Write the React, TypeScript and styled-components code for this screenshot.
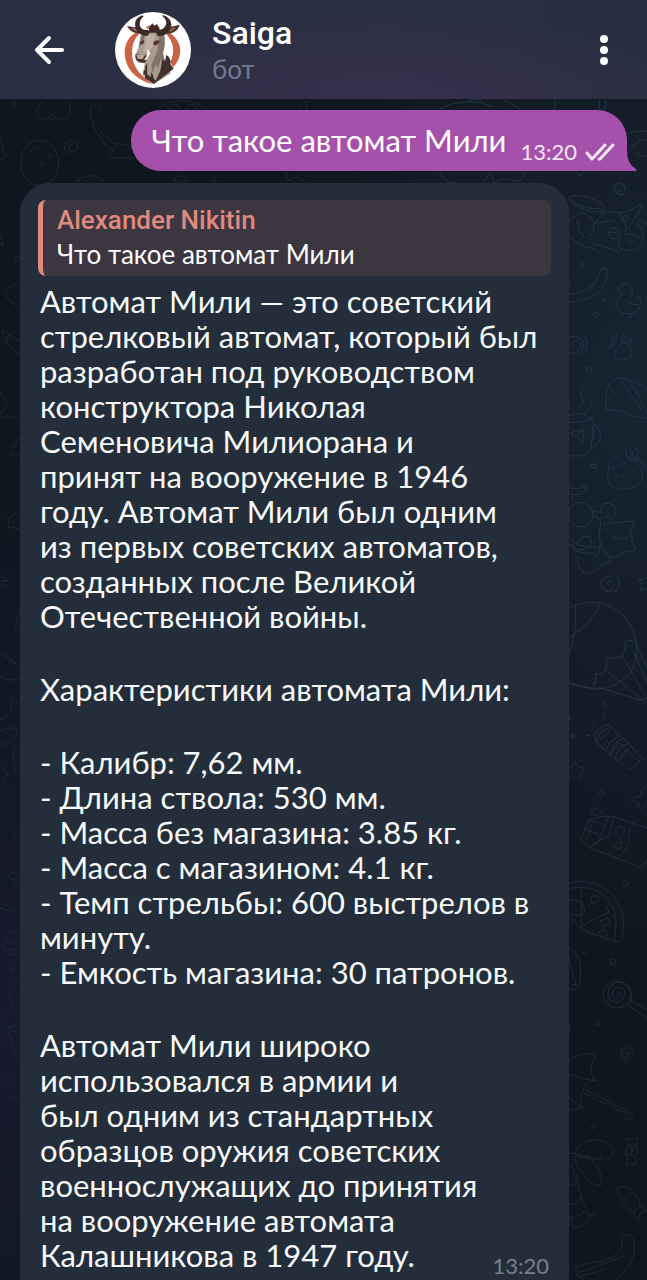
import React from "react";
import styled, { createGlobalStyle } from "styled-components";

const GlobalStyle = createGlobalStyle`
  * { box-sizing: border-box; }
  body { margin: 0; background: #10161f; }
`;

const textFont = `Lato, "Noto Sans", sans-serif`;
const uiFont = `Roboto, "Noto Sans", sans-serif`;

const Page = styled.div`
  position: relative;
  min-height: 100vh;
  display: flex;
  flex-direction: column;
  overflow: hidden;
  color: #fff;
  font-family: ${textFont};
  background:
    radial-gradient(ellipse 60% 45% at 100% 30%, #172432 0%, rgba(23, 36, 50, 0) 100%),
    radial-gradient(ellipse 50% 45% at 0% 80%, #161a2d 0%, rgba(22, 26, 45, 0) 100%),
    #0f161f;
`;

const Doodles = styled.svg<{ $side: "left" | "right" }>`
  position: absolute;
  top: 0;
  ${(p) => p.$side}: 0;
  fill: none;
  stroke: ${(p) => (p.$side === "left" ? "#1f2835" : "#253444")};
  stroke-width: 3;
  stroke-linecap: round;
  stroke-linejoin: round;
`;

const Header = styled.header`
  position: relative;
  display: flex;
  align-items: center;
  height: 99px;
  padding: 0 20px 0 26px;
  background:
    radial-gradient(ellipse 55% 90% at 62% 100%, #37304b 0%, rgba(55, 48, 75, 0) 100%),
    linear-gradient(90deg, #292f42, #2b3043 60%, #252e3e);
`;

const IconButton = styled.button`
  display: flex;
  align-items: center;
  justify-content: center;
  width: 46px;
  height: 46px;
  padding: 0;
  border: 0;
  background: none;
  color: #fff;
`;

const Avatar = styled.svg`
  width: 76px;
  height: 76px;
  margin: 0 21px 0 43px;
  flex: none;
`;

const Peer = styled.div`
  flex: 1;
  padding-top: 2px;
`;

const PeerName = styled.h1`
  margin: 0;
  font-family: ${uiFont};
  font-size: 32px;
  line-height: 36px;
  font-weight: 500;
`;

const PeerStatus = styled.p`
  margin: 0;
  font-family: ${textFont};
  font-size: 26px;
  line-height: 36px;
  color: #747b91;
`;

const Chat = styled.main`
  position: relative;
  flex: 1;
  display: flex;
  flex-direction: column;
  gap: 12px;
  padding: 11px 20px 0;
`;

const Outgoing = styled.article`
  position: relative;
  align-self: flex-end;
  display: flex;
  align-items: flex-end;
  gap: 14px;
  height: 61px;
  padding: 0 12px 0 20px;
  border-radius: 30px 30px 0 30px;
  background: #a551ab;
`;

const Tail = styled.svg`
  position: absolute;
  right: -10px;
  bottom: 0;
`;

const OutgoingText = styled.p`
  margin: 0;
  font-size: 31px;
  line-height: 61px;
`;

const Meta = styled.span<{ $muted?: boolean }>`
  display: flex;
  align-items: center;
  gap: 8px;
  font-size: 22px;
  line-height: 26px;
  color: ${(p) => (p.$muted ? "#73808f" : "#f7e6f8")};
`;

const OutgoingMeta = styled(Meta)`
  padding-bottom: 6px;
`;

const Incoming = styled.article`
  margin-right: 58px;
  padding: 17px 18px 0;
  flex: 1;
  border-radius: 30px 30px 0 0;
  background: #232e3a;
`;

const Quote = styled.blockquote`
  margin: 0 0 8px;
  padding: 4px 14px 5px;
  border-left: 5px solid #e08a7e;
  border-radius: 8px;
  background: #3b3640;
`;

const QuoteAuthor = styled.p`
  margin: 0;
  font-family: ${uiFont};
  font-size: 26px;
  line-height: 33px;
  font-weight: 500;
  color: #e0897d;
`;

const QuoteText = styled.p`
  margin: 0;
  font-size: 26px;
  line-height: 34px;
`;

const Body = styled.div`
  display: flex;
  flex-direction: column;
  gap: 38px;
  padding: 0 2px;
  font-size: 31px;
  line-height: 35px;
  color: #f7f9fb;
`;

const Paragraph = styled.p`
  margin: 0;
  white-space: pre-line;
`;

const LastRow = styled.div`
  display: flex;
  justify-content: space-between;
  align-items: flex-end;

  ${Paragraph} {
    padding-bottom: 6px;
  }
`;

const intro = `Автомат Мили — это советский
стрелковый автомат, который был
разработан под руководством
конструктора Николая
Семеновича Милиорана и
принят на вооружение в 1946
году. Автомат Мили был одним
из первых советских автоматов,
созданных после Великой
Отечественной войны.`;

const specs = `- Калибр: 7,62 мм.
- Длина ствола: 530 мм.
- Масса без магазина: 3.85 кг.
- Масса с магазином: 4.1 кг.
- Темп стрельбы: 600 выстрелов в
минуту.
- Емкость магазина: 30 патронов.`;

const outro = `Автомат Мили широко
использовался в армии и
был одним из стандартных
образцов оружия советских
военнослужащих до принятия
на вооружение автомата
Калашникова в 1947 году.`;

function LeftDoodles() {
  return (
    <Doodles $side="left" width="330" height="1280" viewBox="0 0 330 1280" aria-hidden="true">
      <g transform="translate(0 90) scale(.3333)">
        <circle cx="43" cy="43" r="6" />
        <path d="M126 36q-24 22-10 46 20 16 40-8 22 24 46 8 14-20 4-48M150 74v14h16" />
        <path d="M118 150c38 0 58 36 58 72 0 40-26 64-56 64-34 0-58-30-58-66 0-38 20-70 56-70M90 186q14-14 30-14M120 212v10q6 10 12 0M146 200q12 10 8-6" />
        <path d="M218 168c-10-6-20 8-8 16 18 8 30-18 14-30-26-12-46 32-16 34" />
        <path d="M298 56c12-12-14-24-24-6-10 40 20 102 66 132M300 120q24 34 50 44M326 204l24-44 50 10M326 204h74" />
        <path d="M230 276q30-30 62-14 20 6 18 14M0 134l16 68-16 6M0 436l10 30-10-6" />
        <circle cx="52" cy="507" r="7" />
        <path d="M60 576q-30 12-44 34 10 30 44 42M4 720l56 34M6 724q20 58 54 70M26 732l-8 26M0 904l22 42-22 26M0 982q36-6 60 8M60 1040l-32 54q20 10 32 0M60 1278l-18-8-8 12-12 4 6 14-4 14 16-2 20 6M0 1462q16 0 18 12-10 14-18 10" />
      </g>
      <g transform="translate(0 580) scale(.3333)">
        <path d="M0 4l26-2M4 22l18-6M60 84l-14 60 14 8M0 198q22 36 50 52l-50-30M0 290q40 20 60 4M30 244q22 4 30 24M38 358q0 46-38 62M50 364v12M0 452q34-18 52 0 2 26-52 46M0 560q34 14 10 50l-10 10" />
        <path d="M60 500q-22 0-18 18-10 12 2 22-10 14 2 24-6 14 14 18M52 536a5 5 0 1 1-1 0M60 742l-20 24q8 6 20 2M60 882q-38-10-34 8 6 10 16 6-8 20 18 14M0 970l34 10q14 10 2 16l-36-14" />
        <path d="M24 1082q-18-6 0-20 16-20 30 0M8 1094q30-12 52-6M8 1094q6 40 52 30M10 1110h50" />
        <circle cx="36" cy="1167" r="5" />
        <path d="M60 1198q-60 32-10 98M60 1334l-38 8 24 78 14 20M22 1342q20 20 38 14M60 1550q-20-6-32 6" />
        <circle cx="23" cy="1505" r="11" />
      </g>
      <g transform="scale(.3333)">
        <path d="M470 332q30-32 76-30 50 0 78 30M510 330q-2-20 16-18 14 4 12 18M560 330q0-20 20-16 12 6 8 18M900 330q0-26 26-24M916 332q10-10 4-18M524 546q0-22 22-18 20 6 14 22M540 548q2-10 10-4M640 538l10 10M856 516l10 26 24-10 30 16" />
      </g>
    </Doodles>
  );
}

function RightDoodles() {
  return (
    <Doodles $side="right" width="207" height="1280" viewBox="440 0 207 1280" aria-hidden="true">
      <g transform="translate(440 0) scale(.3333)">
        <path d="M0 326q80-40 160-6M84 306q16-12 44-6M196 302l46 26M344 302q6 14 0 28M478 300v30M496 300q4 20-6 32M560 400q40-10 61-6M570 450q30-40 51-30M590 460q30 20 31 6M0 520q20 40 50 26M130 546l22-30 10 32q36-20 70-2 24-10 18-30M410 520a10 8 0 0 0 18 0M524 570q0-22 18-20 16 6 12 20" />
      </g>
      <g transform="translate(540 170) scale(.3333)">
        <path d="M108 8q8 14 20 2M244 62c-14-8-18 14 0 12 22-8 8-38-12-34-20 8-10 40 22 34" />
        <path d="M86 82c24-16 100 6 108 34-6 24-102 0-108-34M92 92q40 28 94 24M194 122l-12 12M86 156q46-56 76 4 0 40-14 36M86 198q36 36 78 38M112 150q4 40 20 50M162 160l38-34 34 2q26 20 24 54M162 160l60-8M234 128q30 0 70-26 8 10-46 80M164 222l66 20M246 146q18-20 18 0-4 12-18 4" />
        <path d="M236 226c-6-50 62-40 72-12-4 34-66 34-72 12M262 214q8 8 14-2M236 226l-8 16q10 10 18-4M222 206c-20 0-24-30-4-32 30 0 26 30 4 32M206 190q16-10 28 4M310 206l-4-30q-22-16-8-26 12-2 12 12 12-14 11 2" />
        <circle cx="125" cy="284" r="5" />
        <path d="M86 372q82-4 96-74h22q-2 92-118 98M182 298l10-6 12 6M86 326q10 14 0 26" />
        <path d="M244 376c-18-24 2-38 16-34 20 4 22 26 12 36q30-6 30 20c0 44-70 42-74 6-2-14 6-22 16-28M236 358l-6 4M262 394q16 16 38 8M244 430v10M272 432v10M292 384l8 2" />
        <circle cx="193" cy="389" r="5" /><circle cx="168" cy="434" r="7" /><circle cx="148" cy="599" r="8" /><circle cx="160" cy="888" r="7" />
        <path d="M104 528c-14 4-12-16 4-14 26 8 8 44-22 36M86 502q30-10 44 14 4 28-16 36M134 500q14 22 2 38" />
        <path d="M226 562c-12-22 12-26 18-42 24-8 32 20 30 44-10 14-20-2-30 4-8 6-14 2-18-6M216 520q-14 8-6 14 12 0 6-14M230 496q-14 0-10 16 16 4 10-16M252 492q-12 4-4 24 16-2 4-24M272 508q-16 8-4 18 14-6 4-18" />
        <path d="M192 718q10-6 6-20c-2-50 20-74 40-76 40 4 82 100 83 114M238 622q60 16 83 36M192 718q60 2 84 20l45 6M216 664q12 14 22-6M244 632l62 90M286 670q10 4 14-6" />
        <path d="M88 718v-18M116 714q24-18 10-30-12-16 6-34M138 724q22-14 14-38M86 736q40-14 70 10-40 16-70 10M156 746q6 80-10 104-30 14-60 6M160 762q26 10 20 46-4 18-30 20M160 774q14 20-8 40M92 788l40-10-4 36-22-12zM132 778l-26 24" />
        <path d="M206 898q0-36 34-36M262 862c-10-20-6-34 6-28q6 12 8 24M276 858q8-30 20-20 4 12-10 26 24 2 26 16M260 862q40 0 61 38M232 880l2 6M252 876v6M270 886v6M290 884l2 6M222 892v4" />
      </g>
      <g transform="translate(540 460) scale(.3333)">
        <circle cx="161" cy="19" r="7" />
        <path d="M212 2c-20 66-8 86 40 86 46-2 66-30 48-66-10-16-20-22-30-22M222 24v5M240 16v6M262 22v6M282 30v6M228 48v5M248 44v6M270 52v6M288 56v5M238 70v5M258 72v5" />
        <path d="M86 82q40 12 46-8 12 2 4 16-16 20-44 12l10 22" /><circle cx="122" cy="164" r="37" />
        <path d="M158 154l28 4q-14-26 16-28 34 2 24 34-10 16-24 8 8-14-2-20M160 166q26 6 22 30-10 40 6 68l24 30M190 200q20-22 34-10l58-8q4 10-12 28 8 20 6 36l12 22q-6 10-30 4-20 22-48 20M196 208l14 2M220 232l18 4M246 238l16-4M234 222l2 6M86 230q30 40 92 30M86 250q20 30 60 14 14-20 4-32-20-8-28 8l-24 16q-6 16 20 20l50 6M112 290q-6 42 30 50 24 2 44-28 32-4 24-18M180 258q0 30-18 34" />
        <path d="M208 376c-10-4-8-16 4-14 18 6 6 32-12 28-28-8-18-44 12-42M228 346q20 24 2 44-20 14-42-2M321 352l-10 6-14 2 8 14-4 18 20-6" />
        <path d="M86 444c70-40 178-12 202 96 10 60-10 140-120 148l-82-20M106 436q6 90-20 148M182 428q-20 60-96 106M86 668q40 20 96 16l130 40M288 540l-34 4q4 30-8 42-20 18-48 4 8 20-2 42-16 16-30 8 6 20-4 36M246 586l75 130M198 632l114 90M286 548l35 76M280 570l41 100M300 722l21-8" />
        <circle cx="194" cy="736" r="6" />
        <path d="M190 758l6 18M156 784l10 10M138 826l12 2M86 762q8 12 0 26" />
        <path d="M164 838c-6-20 24-48 46-42 10 12-20 48-46 42M174 832q6-20 28-26M164 838l48 48M214 800l24 30M212 886q4-40 40-52l16 20M238 830q-30 10-38 38M226 896q4-34 36-46M268 854l44 46M240 896q10-24 26-30" />
        <circle cx="99" cy="828" r="5" />
      </g>
      <g transform="translate(540 740) scale(.3333)" stroke="#222c3a">
        <path d="M164 4l94 80q14 8 24 0l18-18-70-64M186 24l16-20M212 46l24-38M236 64l24-28M272 86l26-24M86 84l8-2 10-18 10 18 20 2-12 16 2 18-18-8-16 6-2-8" />
        <circle cx="184" cy="158" r="8" /><circle cx="256" cy="430" r="8" /><circle cx="219" cy="665" r="8" />
        <path d="M321 134q-22 16-18 34-20 2-30 12 10 8 22 8-4 16 8 18 14-6 18-24" />
        <path d="M158 210l16-8 12 12-16 12-14-4zM146 240q40-14 74-10l101 34M146 240l-24 58 28 26 148 56q12 2 23-20M206 232l-34 76-22 16M220 232l-12 54-56 30M146 240l46 14M136 268l40 16M160 244l-20 54M184 232q10-10 20 0M280 258q-20 14-12 36-4 30-26 54M230 286q-10-24 12-28 20 6 8 26l-12 12q12 10 4 34l-22-10M222 314l20-10" />
        <path d="M86 430c80-24 164 30 164 122 0 30-4 54-16 54-60-16-100-34-116-46l-32-32M86 446c80-20 142 32 142 104l-4 48M124 450v108M124 558l82-42M86 482c30-10 54 16 46 36-10 14-30 8-46 0M154 470q24-8 22 8-20 20-22 6zM182 542l22-8q10 8 0 22-20 4-22-14M206 496q-10 8-2 14 4 18 16 18M174 584q14-28 26-6v14M134 570q16 14 24 14" />
        <path d="M88 624q44 16 30 110-10 24-32 12M86 654l22 80M100 734q20-4 22 8M128 640l10-2" />
        <path d="M234 764c-10-4-4-12 4-8 10 12-8 26-20 12-8-30 28-34 36-12 2 38-46 38-50 8-2-46 64-50 70-6-2 60-84 60-84 4 6-54 76-50 84 6 2 14-4 24-10 30M274 782l47 28M264 796l57 38" />
      </g>
      <g transform="translate(540 1000) scale(.3333)" stroke="#202833">
        <circle cx="172" cy="70" r="7" /><circle cx="158" cy="382" r="6" />
        <path d="M86 66q8 20 0 40M262 164c-10 2-4-14 2-8 10 16-14 22-16 4 4-22 34-20 32-2-4 22-30 26-38 2-2-22 18-24 24-20M242 164q0 18 22 22" />
        <path d="M86 182q30-28 80-20 4 6-6 18-14 24 0 56l12 8q-70-14-86-22M160 238q-40 10-38 82M86 292l42 32-42 6M136 270l130 66q18 8 8 22-12 8-20-4M134 280l120 60q16 4 12 14" />
        <path d="M104 460c20-54 100-52 116-8 0 40-70 26-116 8M104 468l8 30q40 64 72 58c2-60-30-86-72-88M120 470v-8M142 474l2-10M162 478v-10M182 474v-10M86 460h16M86 496q24 10 14 30M110 520q4 60 36 128 4 30-46 36M86 550q14 16 26-10M86 610q20 14 38-20M90 654q24 2 42-20M86 640l14 44M146 646l22-2" />
        <path d="M262 414q12 8 30-2l-4 24q10 20-2 34l2 24q-12-6-28 2l4-24q-12-20 0-34zM264 434q12 10 22 0M262 468q10-8 26 0M268 438q20 10 0 28" />
        <path d="M230 566c20-24 70 18 70 52l20 14-20 8-4 22q-14-6-14-26-40-14-52-70M282 636q10-10 18-18M244 590l10 2M256 596l12-14" />
        <path d="M110 800c20-14 120-8 136-62-4-36 12-44 30-26 20 44-4 88-46 128M106 808q10 18 50-4l92-34M120 828l80-20M110 800q-6 10 0 26l20 10" />
      </g>
    </Doodles>
  );
}

function SaigaLogo() {
  return (
    <Avatar viewBox="44 36 228 228" role="img" aria-label="Saiga">
      <circle cx="158" cy="150" r="114" fill="#fff" />
      <path d="M106 98C60 124 66 190 102 224q24 22 56 28c-34-22-56-46-62-78q-6-48 22-74z" fill="#cd6346" />
      <path d="M208 98q30 20 32 52-1 32-22 52l-8-16q22-46-12-84z" fill="#cd6346" />
      <path d="M136 82q18-14 44 0l-8 6h-28z" fill="#c87b58" />
      <path d="M80 78l34 6 14 14q-34 8-48-20M239 74q-12 32-48 26l14-18z" fill="#493331" />
      <path d="M92 83l22 5 8 7q-20 0-30-12M228 81q-14 15-30 15l10-10z" fill="#aa6256" />
      <path d="M146 84l10-14 6 8 8-6 10 20-8 12h-26z" fill="#3b2927" />
      <path d="M122 106l20-8h34l16 8q4 30-3 52 2 26 12 36l10 26-50 32-34-26 6-36-16-2q-14-6-13-24l12-22z" fill="#a99b90" />
      <path d="M122 106l12-6-4 22-8 14-8 8zM176 106l16 1q3 28-5 51l8 34-14-14-6 24-18 30-4-36 18-44 4-22z" fill="#83746b" />
      <path d="M138 104l26 0-6 34-16 22-14-8 8-22z" fill="#bdafa3" />
      <path d="M142 146l8 14-10 18-8 6 8-20z" fill="#fff" />
      <path d="M106 164q14-6 20 4l14-2-10 14 10 0-8 8q-24 2-26-16z" fill="#47312e" />
      <path d="M108 166q14-8 24 2l-6 10-14-2z" fill="#b9a99c" />
      <path d="M117 128l13-8 2 6-6 8zM158 129q8-12 20-6-4 14-16 13z" fill="#56352e" />
      <path d="M141 190q-8 8-6 20-6 0-6 10l6 6-2 8 27 18 60-46-10-14q4-16-12-28l-4 20-8-6-6 34-14 30-12-26-4 16-10-10z" fill="#43302d" />
      <path d="M168 192l6 22-12 26-6-22z" fill="#a99b90" />
      <path d="M127 46q-28 8-22 38 10 24 36 24l8-12-6-6q-22 2-25-16 0-16 12-25zM188 45q30 10 24 40-12 26-40 23l-6-12 8-6q20 0 24-20 0-12-12-22z" fill="#3b2927" />
    </Avatar>
  );
}

export default function App() {
  return (
    <Page>
      <GlobalStyle />
      <LeftDoodles />
      <RightDoodles />
      <Header>
        <IconButton type="button" aria-label="Назад">
          <svg width="32" height="30" viewBox="0 0 32 30" fill="none" stroke="currentColor" strokeWidth="4" strokeLinecap="round" strokeLinejoin="round">
            <path d="M29 15H4M16 3L4 15l12 12" />
          </svg>
        </IconButton>
        <SaigaLogo />
        <Peer>
          <PeerName>Saiga</PeerName>
          <PeerStatus>бот</PeerStatus>
        </Peer>
        <IconButton type="button" aria-label="Меню">
          <svg width="8" height="30" viewBox="0 0 8 30" fill="currentColor">
            <circle cx="4" cy="4" r="4" />
            <circle cx="4" cy="15" r="4" />
            <circle cx="4" cy="26" r="4" />
          </svg>
        </IconButton>
      </Header>
      <Chat>
        <Outgoing>
          <OutgoingText>Что такое автомат Мили</OutgoingText>
          <OutgoingMeta>
            <time>13:20</time>
            <svg width="30" height="18" viewBox="0 0 30 18" fill="none" stroke="currentColor" strokeWidth="3" strokeLinecap="round" strokeLinejoin="round">
              <path d="M2 10l5 6L20 2M14 16h1L28 2" />
            </svg>
          </OutgoingMeta>
          <Tail width="11" height="30" viewBox="0 0 11 30" fill="#a551ab">
            <path d="M0 0h1v10Q1 23 10 28q1 2-1 2H0z" />
          </Tail>
        </Outgoing>
        <Incoming>
          <Quote>
            <QuoteAuthor>Alexander Nikitin</QuoteAuthor>
            <QuoteText>Что такое автомат Мили</QuoteText>
          </Quote>
          <Body>
            <Paragraph>{intro}</Paragraph>
            <Paragraph>Характеристики автомата Мили:</Paragraph>
            <Paragraph>{specs}</Paragraph>
            <LastRow>
              <Paragraph>{outro}</Paragraph>
              <Meta $muted>
                <time>13:20</time>
              </Meta>
            </LastRow>
          </Body>
        </Incoming>
      </Chat>
    </Page>
  );
}
